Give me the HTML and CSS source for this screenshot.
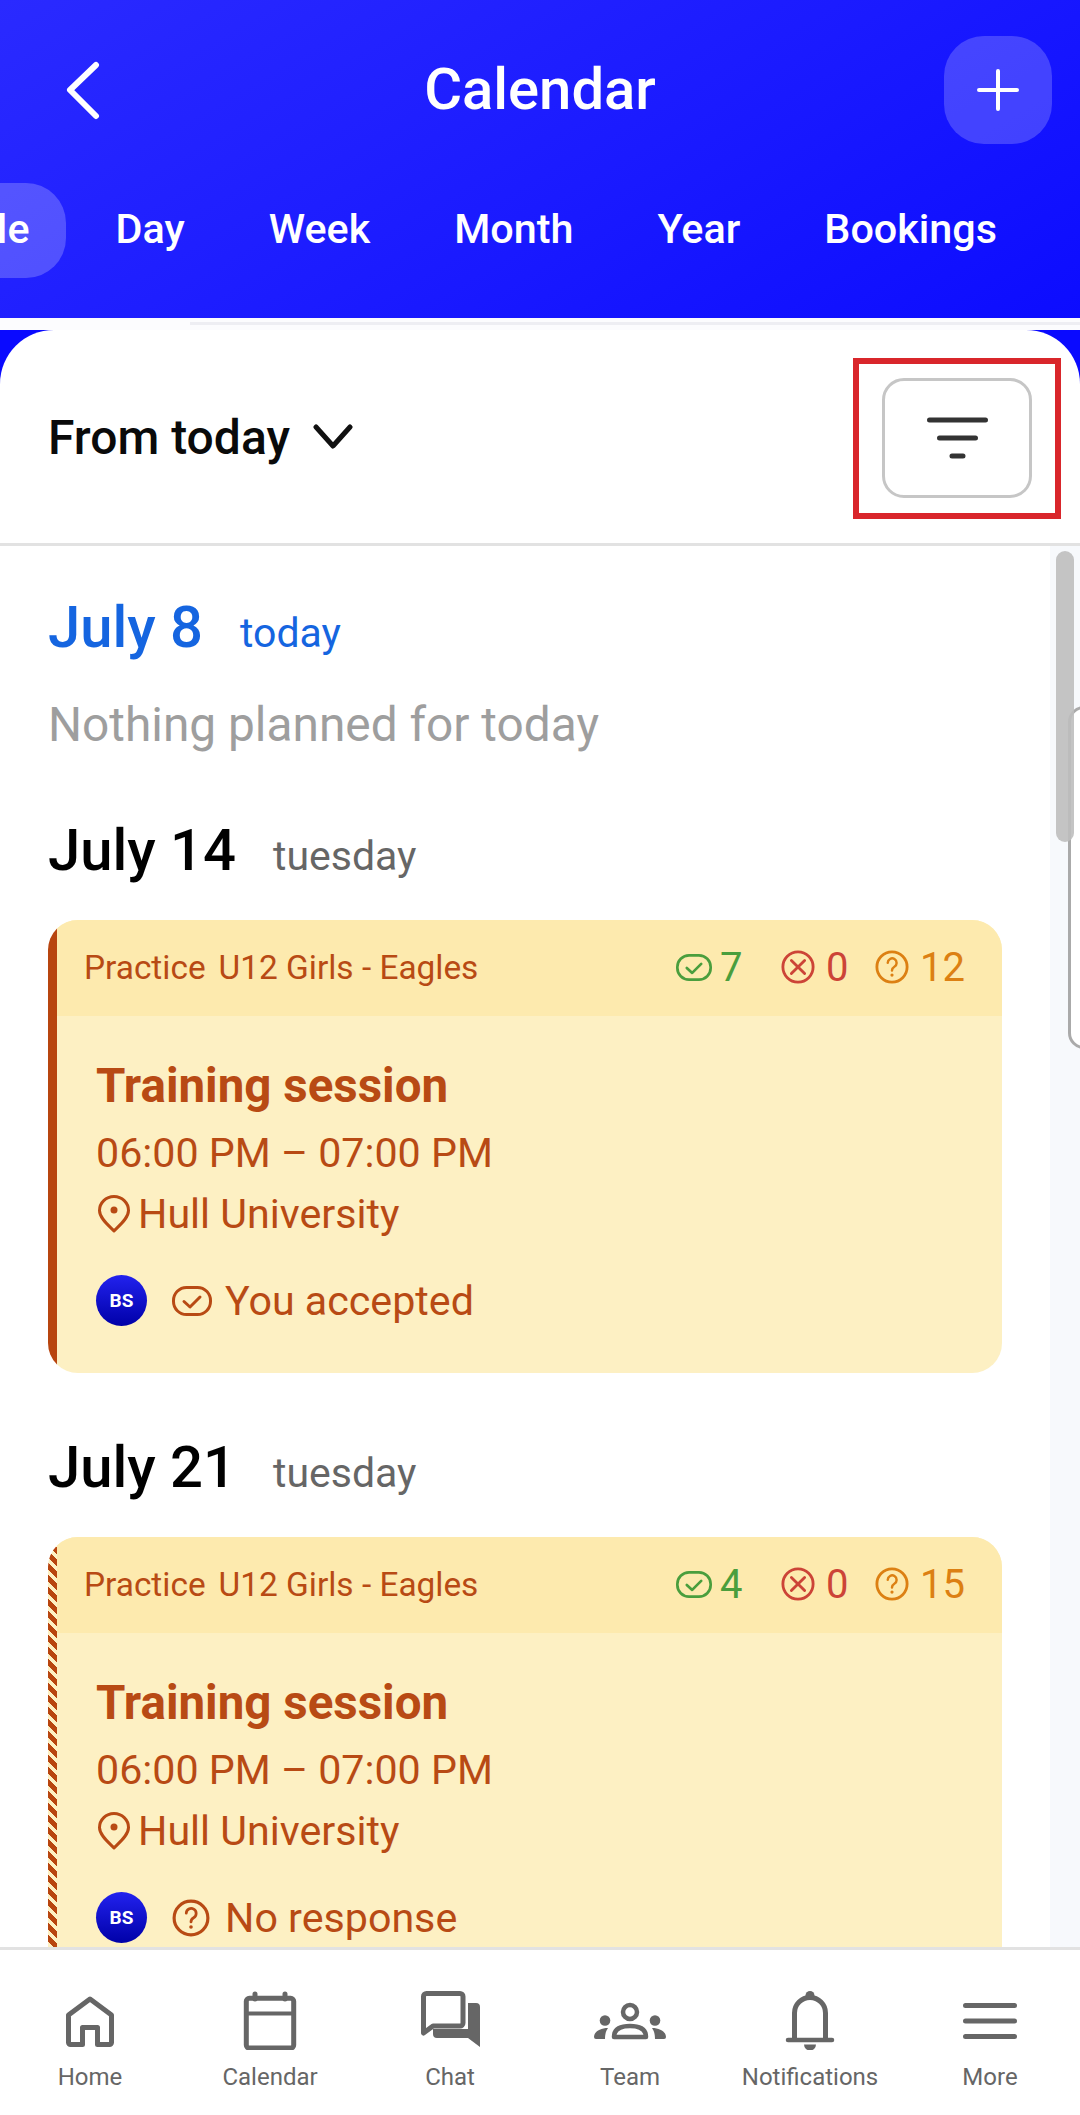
FILE: index.html
```html
<!DOCTYPE html>
<html lang="en">
<head>
<meta charset="utf-8">
<title>Calendar</title>
<link rel="stylesheet" href="styles.css">
</head>
<body>
<svg class="defs" width="0" height="0" aria-hidden="true">
  <symbol id="i-check" viewBox="0 0 40 30"><rect x="1.5" y="1.5" width="37" height="27" rx="13" fill="none" stroke="currentColor" stroke-width="3"/><path d="M12 15.5l6 5.5 10-10" fill="none" stroke="currentColor" stroke-width="3" stroke-linecap="round" stroke-linejoin="round"/></symbol>
  <symbol id="i-x" viewBox="0 0 36 36"><circle cx="18" cy="18" r="16" fill="none" stroke="currentColor" stroke-width="3"/><path d="M11 11l14 14M25 11L11 25" fill="none" stroke="currentColor" stroke-width="3" stroke-linecap="round"/></symbol>
  <symbol id="i-q" viewBox="0 0 36 36"><circle cx="18" cy="18" r="16" fill="none" stroke="currentColor" stroke-width="3"/><path d="M13.5 13.5a4.7 4.7 0 1 1 7 4.2c-1.700 1-2.500 2-2.500 4" fill="none" stroke="currentColor" stroke-width="2.600" stroke-linecap="round"/><circle cx="18" cy="26.500" r="1.700" fill="currentColor"/></symbol>
  <symbol id="i-pin" viewBox="0 0 32 38"><path d="M16 36C10 30 1.500 23 1.500 15.500a14.500 14 0 0 1 29 0C30.500 23 22 30 16 36Z" fill="none" stroke="currentColor" stroke-width="3" stroke-linejoin="round"/><circle cx="16" cy="15" r="3.500" fill="currentColor"/></symbol>
</svg>

<header class="topbar">
  <div class="topbar-row">
    <button class="back" aria-label="Back">
      <svg width="38" height="60" viewBox="0 0 38 60"><path d="M32 5L6 30l26 26" fill="none" stroke="#fff" stroke-width="6" stroke-linecap="round" stroke-linejoin="round"/></svg>
    </button>
    <h1 class="title">Calendar</h1>
    <button class="add" aria-label="Add">
      <svg width="44" height="44" viewBox="0 0 44 44"><path d="M22 3v38M3 22h38" fill="none" stroke="#fff" stroke-width="4" stroke-linecap="round"/></svg>
    </button>
  </div>
  <nav class="tabs">
    <a class="tab tab-active">Schedule</a>
    <a class="tab">Day</a>
    <a class="tab">Week</a>
    <a class="tab">Month</a>
    <a class="tab">Year</a>
    <a class="tab">Bookings</a>
  </nav>
</header>
<div class="strip"><span class="strip-line"></span></div>

<main class="sheet">
  <div class="sheet-inner">
    <div class="filter-row">
      <div class="range">
        <span>From today</span>
        <svg width="40" height="26" viewBox="0 0 40 26"><path d="M3 3l17 19L37 3" fill="none" stroke="#111" stroke-width="5" stroke-linecap="round" stroke-linejoin="round"/></svg>
      </div>
      <button class="filter-btn" aria-label="Filter">
        <svg width="64" height="46" viewBox="0 0 64 46"><path d="M4.500 5h56M14.500 23h36M27 41h11" fill="none" stroke="#333" stroke-width="5" stroke-linecap="round"/></svg>
      </button>
      <div class="highlight"></div>
    </div>

    <div class="list">
      <div class="days">
        <div class="day-head day-today"><span class="day-date">July 8</span><span class="day-name">today</span></div>
        <p class="empty">Nothing planned for today</p>

        <div class="day-head day-14"><span class="day-date">July 14</span><span class="day-name">tuesday</span></div>
        <article class="event">
          <div class="event-top">
            <div class="event-kind"><span>Practice</span><span>U12 Girls - Eagles</span></div>
            <div class="counts">
              <span class="count c-yes"><svg class="ic-check-s"><use href="#i-check"/></svg>7</span>
              <span class="count c-no"><svg class="ic-round"><use href="#i-x"/></svg>0</span>
              <span class="count c-maybe"><svg class="ic-round"><use href="#i-q"/></svg>12</span>
            </div>
          </div>
          <div class="event-body">
            <h2 class="event-title">Training session</h2>
            <div class="event-time">06:00 PM – 07:00 PM</div>
            <div class="event-place"><svg class="ic-pin"><use href="#i-pin"/></svg>Hull University</div>
            <div class="event-me"><span class="avatar">BS</span><svg class="ic-check-l"><use href="#i-check"/></svg><span>You accepted</span></div>
          </div>
        </article>

        <div class="day-head day-21"><span class="day-date">July 21</span><span class="day-name">tuesday</span></div>
        <article class="event event-pending">
          <div class="event-top">
            <div class="event-kind"><span>Practice</span><span>U12 Girls - Eagles</span></div>
            <div class="counts">
              <span class="count c-yes"><svg class="ic-check-s"><use href="#i-check"/></svg>4</span>
              <span class="count c-no"><svg class="ic-round"><use href="#i-x"/></svg>0</span>
              <span class="count c-maybe"><svg class="ic-round"><use href="#i-q"/></svg>15</span>
            </div>
          </div>
          <div class="event-body">
            <h2 class="event-title">Training session</h2>
            <div class="event-time">06:00 PM – 07:00 PM</div>
            <div class="event-place"><svg class="ic-pin"><use href="#i-pin"/></svg>Hull University</div>
            <div class="event-me"><span class="avatar">BS</span><svg class="ic-q-l"><use href="#i-q"/></svg><span>No response</span></div>
          </div>
        </article>
      </div>
      <div class="gutter">
        <div class="side-panel"></div>
        <div class="thumb"></div>
      </div>
    </div>
  </div>
</main>

<nav class="bottom-nav">
  <a class="nav-item">
    <svg width="60" height="60" viewBox="0 0 60 60"><path d="M30 9L51.500 25V52.500a2 2 0 0 1-2 2H37.500V37.500H22.500V54.500H10.500a2 2 0 0 1-2-2V25Z" fill="none" stroke="#666" stroke-width="5" stroke-linejoin="round"/></svg>
    <span>Home</span>
  </a>
  <a class="nav-item">
    <svg width="60" height="60" viewBox="0 0 60 60"><rect x="6.300" y="8.300" width="47.400" height="49.700" rx="3" fill="none" stroke="#666" stroke-width="5"/><path d="M6 23.500h48" stroke="#666" stroke-width="4"/><path d="M15 4v5M45 4v5" stroke="#666" stroke-width="5" stroke-linecap="round"/></svg>
    <span>Calendar</span>
  </a>
  <a class="nav-item">
    <svg width="60" height="60" viewBox="0 0 60 60"><path d="M6.500 3.500H40a3 3 0 0 1 3 3V33a3 3 0 0 1-3 3H13L3.500 43V6.500a3 3 0 0 1 3-3Z" fill="none" stroke="#666" stroke-width="5" stroke-linejoin="round"/><path d="M48 13h8a4 4 0 0 1 4 4V57L48 48H17a4 4 0 0 1-4-4V39H48Z" fill="#666"/></svg>
    <span>Chat</span>
  </a>
  <a class="nav-item">
    <svg width="72" height="60" viewBox="0 0 72 60"><circle cx="36" cy="22" r="7" fill="none" stroke="#666" stroke-width="4.500"/><path d="M20 47C20 38 28 36 36 36S52 38 52 47Z" fill="none" stroke="#666" stroke-width="4.500" stroke-linejoin="round"/><circle cx="11" cy="30.500" r="5.300" fill="#666"/><circle cx="61" cy="30.500" r="5.300" fill="#666"/><path d="M0 47C0 42 6 38 14 38C12 41 11 44 11 49H2a2 2 0 0 1-2-2Z" fill="#666"/><path d="M72 47C72 42 66 38 58 38C60 41 61 44 61 49H70a2 2 0 0 0 2-2Z" fill="#666"/></svg>
    <span>Team</span>
  </a>
  <a class="nav-item">
    <svg width="60" height="60" viewBox="0 0 60 60"><path d="M14.500 50V23a15.500 15.500 0 0 1 31 0V50" fill="none" stroke="#666" stroke-width="5"/><path d="M8 50h44" stroke="#666" stroke-width="4.500" stroke-linecap="round"/><circle cx="30" cy="5.500" r="4.500" fill="#666"/><path d="M24 54.500h12a6 6 0 0 1-12 0Z" fill="#666"/></svg>
    <span>Notifications</span>
  </a>
  <a class="nav-item">
    <svg width="60" height="60" viewBox="0 0 60 60"><path d="M5.500 15.500h49M5.500 31h49M5.500 46.500h49" fill="none" stroke="#666" stroke-width="5" stroke-linecap="round"/></svg>
    <span>More</span>
  </a>
</nav>
</body>
</html>
```

FILE: styles.css
```css
* { box-sizing: border-box; }

html, body {
  margin: 0;
  padding: 0;
}

body {
  width: 1080px;
  height: 2115px;
  overflow: hidden;
  display: flex;
  flex-direction: column;
  font-family: Roboto, "Liberation Sans", sans-serif;
  background: #fff;
  color: #000;
}

.defs { position: absolute; }

button {
  border: 0;
  padding: 0;
  background: none;
  font: inherit;
}

/* header */
.topbar {
  height: 318px;
  flex: none;
  padding: 36px 28px 0 0;
  background: linear-gradient(150deg, #2a2aff 0%, #1a1aff 55%, #0c0cff 100%);
  color: #fff;
  overflow: hidden;
}

.topbar-row {
  display: flex;
  align-items: center;
  justify-content: space-between;
  height: 108px;
}

.back {
  width: 38px;
  height: 60px;
  margin-left: 64px;
  display: flex;
}

.title {
  margin: 0 0 2px 0;
  font-size: 58px;
  font-weight: 500;
  line-height: 1;
  position: absolute;
  left: 0;
  width: 1080px;
  text-align: center;
}

.add {
  width: 108px;
  height: 108px;
  border-radius: 40px;
  background: rgba(255, 255, 255, 0.2);
  display: flex;
  align-items: center;
  justify-content: center;
}

.tabs {
  display: flex;
  gap: 0;
  margin-top: 39px;
  margin-left: -177px;
  width: 1320px;
}

.tab {
  height: 95px;
  padding: 0 42px 4px;
  display: flex;
  align-items: center;
  font-size: 41.300px;
  font-weight: 500;
  white-space: nowrap;
}

.tab-active {
  border-radius: 40px;
  background: rgba(255, 255, 255, 0.22);
  padding: 0 36px 4px;
  margin-right: 8px;
}

.strip {
  height: 12px;
  flex: none;
  background: #fcfcfe;
  padding-top: 4px;
}

.strip-line {
  display: block;
  height: 3px;
  margin-left: 190px;
  background: #eeeef3;
}

/* sheet */
.sheet {
  flex: 1;
  min-height: 0;
  background: #0a0aff;
}

.sheet-inner {
  height: 100%;
  background: #fff;
  border-radius: 54px 54px 0 0;
  display: flex;
  flex-direction: column;
  overflow: hidden;
}

.filter-row {
  position: relative;
  flex: none;
  height: 216px;
  padding: 3px 48px 0;
  border-bottom: 3px solid #e2e2e2;
  display: flex;
  align-items: center;
  justify-content: space-between;
}

.range {
  display: flex;
  align-items: center;
  gap: 23px;
  font-size: 48px;
  font-weight: 500;
  color: #0a0a0a;
  margin-top: -2px;
}

.filter-btn {
  width: 150px;
  height: 120px;
  border: 3px solid #c6c6c6;
  border-radius: 22px;
  background: #fff;
  display: flex;
  align-items: center;
  justify-content: center;
}

.highlight {
  position: absolute;
  left: 853px;
  top: 28px;
  width: 208px;
  height: 161px;
  border: 6px solid #d9262b;
}

/* list */
.list {
  flex: 1;
  min-height: 0;
  display: flex;
  overflow: hidden;
}

.days {
  width: 1050px;
  flex: none;
  padding: 0 48px;
}

.day-head {
  display: flex;
  align-items: baseline;
  gap: 37px;
  line-height: 70px;
  height: 70px;
}

.day-today {
  margin-top: 46px;
  color: #1565e0;
}

.day-date {
  font-size: 58px;
  font-weight: 500;
}

.day-name {
  font-size: 41px;
  color: #666;
}

.day-today .day-name { color: #1565e0; }

.empty {
  margin: 35px 0 0;
  font-size: 47.800px;
  line-height: 56px;
  color: #9e9e9e;
}

.day-14 { margin-top: 62px; margin-bottom: -2px; }
.day-21 { margin-top: 59px; margin-bottom: -2px; }

/* event card */
.event {
  position: relative;
  margin-top: 37px;
  width: 954px;
  height: 453px;
  border-radius: 30px;
  overflow: hidden;
  padding-left: 9px;
  background: linear-gradient(#b8450f, #b8450f) left top / 9px 100% no-repeat, #fdf0c3;
  color: #b84a14;
}

.event-pending {
  background: repeating-linear-gradient(45deg, #b8450f 0 5px, #fdf0c3 5px 8.500px) left top / 9px 100% no-repeat, #fdf0c3;
}

.event-top {
  height: 96px;
  background: #fdeaae;
  padding: 0 37px 2px 27px;
  display: flex;
  align-items: center;
  justify-content: space-between;
}

.event-kind {
  display: flex;
  gap: 13px;
  font-size: 33.400px;
}

.counts {
  display: flex;
  align-items: center;
  font-size: 40px;
}

.count {
  display: flex;
  align-items: center;
}

.c-yes { width: 105px; gap: 8px; color: #4a9e3d; }
.c-no { width: 94px; gap: 11px; color: #cc4437; }
.c-maybe { gap: 11px; color: #dc8013; }

.ic-check-s { width: 36px; height: 27px; }
.ic-round { width: 34px; height: 34px; }
.ic-pin { width: 32px; height: 38px; flex: none; }
.ic-check-l { width: 40px; height: 30px; flex: none; }
.ic-q-l { width: 38px; height: 38px; flex: none; }

.event-body {
  padding: 40px 0 0 39px;
}

.event-title {
  margin: 0;
  font-size: 47.500px;
  font-weight: 700;
  line-height: 60px;
}

.event-time {
  margin-top: 12px;
  font-size: 41.200px;
  line-height: 50px;
}

.event-place {
  margin-top: 12px;
  display: flex;
  align-items: center;
  gap: 8px;
  font-size: 41.200px;
  line-height: 48px;
  padding-left: 2px;
}

.event-me {
  margin-top: 37px;
  display: flex;
  align-items: center;
  font-size: 41.200px;
}

.event-me svg { margin: 0 13px 0 25px; }
.event-me .ic-q-l { margin-right: 15px; }

.avatar {
  width: 51px;
  height: 51px;
  border-radius: 50%;
  flex: none;
  display: flex;
  align-items: center;
  justify-content: center;
  background: linear-gradient(#2222ee, #0000a8);
  color: #fff;
  font-size: 19px;
  font-weight: 700;
}

/* right gutter */
.gutter {
  position: relative;
  flex: 1;
  background: #f7f9fc;
}

.thumb {
  position: absolute;
  left: 6px;
  top: 5px;
  width: 18px;
  height: 291px;
  border-radius: 9px;
  background: rgba(190, 190, 190, 0.9);
}

.side-panel {
  position: absolute;
  left: 18px;
  top: 160px;
  width: 40px;
  height: 343px;
  background: #fff;
  border: 3px solid #aaa;
  border-radius: 16px;
}

/* bottom nav */
.bottom-nav {
  flex: none;
  position: relative;
  height: 168px;
  background: #fff;
  border-top: 3px solid #e2e2e2;
  display: grid;
  grid-template-columns: repeat(6, 180px);
  padding-top: 40px;
}

.nav-item {
  display: flex;
  flex-direction: column;
  align-items: center;
  color: #666;
  font-size: 24px;
  line-height: 34px;
}

.nav-item svg { flex: none; }

.nav-item span { margin-top: 10px; white-space: nowrap; }
```
